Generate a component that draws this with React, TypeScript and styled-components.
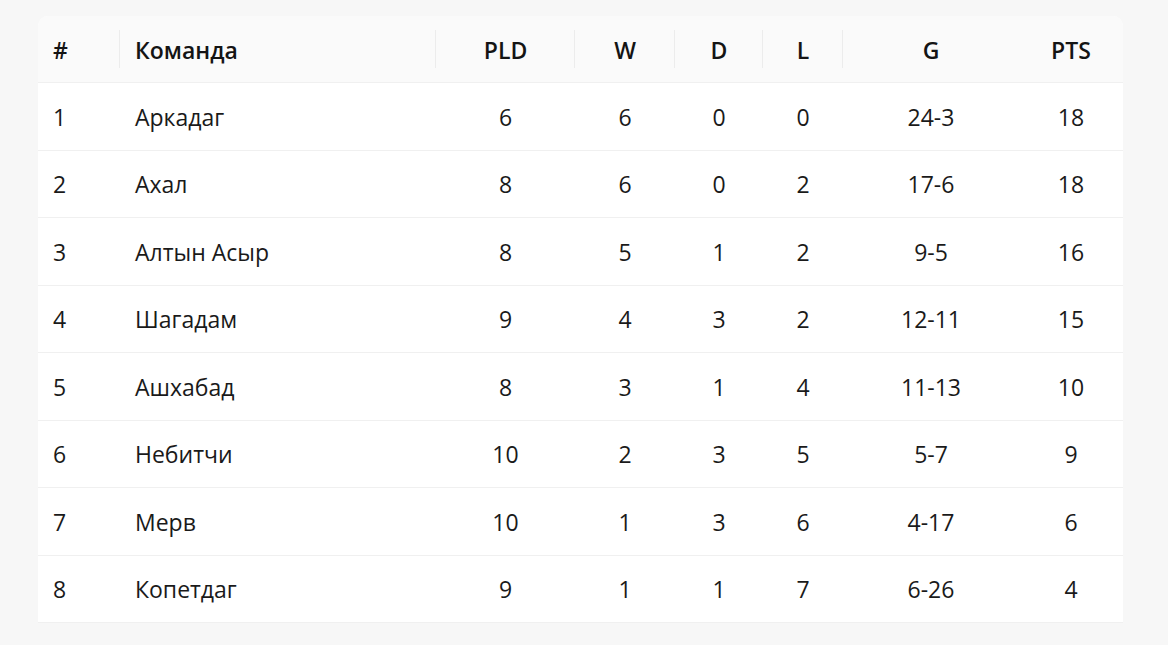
import React from "react";
import styled, { createGlobalStyle } from "styled-components";

const Global = createGlobalStyle`
  html, body { margin: 0; padding: 0; background: #f7f7f7; }
  body { font-family: "Open Sans", "Noto Sans", "Liberation Sans", sans-serif; }
`;

const Page = styled.div`
  padding: 16px 45px 0 38px;
`;

const Table = styled.table`
  width: 1085px;
  border-collapse: separate;
  border-spacing: 0;
  table-layout: fixed;
  background: #ffffff;
  border-radius: 10px 10px 0 0;
  font-size: 23px;
  color: #1a1a1a;
`;

const Th = styled.th<{ $align?: "left" | "center"; $sep?: boolean; $first?: boolean; $last?: boolean }>`
  position: relative;
  height: 65px;
  padding: 1px 15px 0;
  background: #fafafa;
  border-bottom: 1px solid #f0f0f0;
  font-weight: 600;
  text-align: ${(p) => p.$align ?? "center"};
  color: #141414;
  border-top-left-radius: ${(p) => (p.$first ? "10px" : "0")};
  border-top-right-radius: ${(p) => (p.$last ? "10px" : "0")};
  &::before {
    content: "";
    display: ${(p) => (p.$sep ? "block" : "none")};
    position: absolute;
    right: 0;
    top: 50%;
    width: 1px;
    height: 38px;
    transform: translateY(-50%);
    background: #ececec;
  }
`;

const Td = styled.td<{ $align?: "left" | "center" }>`
  height: 65.5px;
  padding: 1px 15px 0;
  border-bottom: 1px solid #f0f0f0;
  text-align: ${(p) => p.$align ?? "center"};
  color: #1a1a1a;
`;

const cols = [82, 316, 139, 100, 88, 80, 176, 104];

const rows: [number, string, number, number, number, number, string, number][] = [
  [1, "Аркадаг", 6, 6, 0, 0, "24-3", 18],
  [2, "Ахал", 8, 6, 0, 2, "17-6", 18],
  [3, "Алтын Асыр", 8, 5, 1, 2, "9-5", 16],
  [4, "Шагадам", 9, 4, 3, 2, "12-11", 15],
  [5, "Ашхабад", 8, 3, 1, 4, "11-13", 10],
  [6, "Небитчи", 10, 2, 3, 5, "5-7", 9],
  [7, "Мерв", 10, 1, 3, 6, "4-17", 6],
  [8, "Копетдаг", 9, 1, 1, 7, "6-26", 4],
];

export default function App() {
  return (
    <>
      <Global />
      <Page>
        <Table>
          <colgroup>
            {cols.map((w, i) => (
              <col key={i} style={{ width: w }} />
            ))}
          </colgroup>
          <thead>
            <tr>
              <Th $align="left" $sep $first>#</Th>
              <Th $align="left" $sep>Команда</Th>
              <Th $sep>PLD</Th>
              <Th $sep>W</Th>
              <Th $sep>D</Th>
              <Th $sep>L</Th>
              <Th>G</Th>
              <Th $last>PTS</Th>
            </tr>
          </thead>
          <tbody>
            {rows.map((r) => (
              <tr key={r[0]}>
                <Td $align="left">{r[0]}</Td>
                <Td $align="left">{r[1]}</Td>
                <Td>{r[2]}</Td>
                <Td>{r[3]}</Td>
                <Td>{r[4]}</Td>
                <Td>{r[5]}</Td>
                <Td>{r[6]}</Td>
                <Td>{r[7]}</Td>
              </tr>
            ))}
          </tbody>
        </Table>
      </Page>
    </>
  );
}
